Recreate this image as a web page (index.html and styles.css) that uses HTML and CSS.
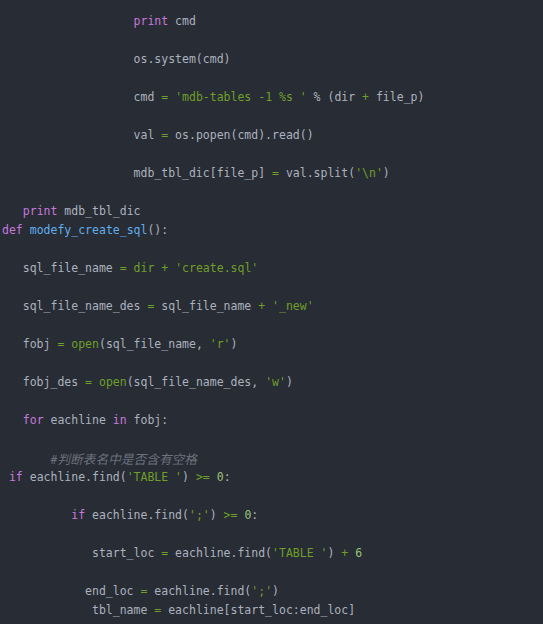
FILE: index.html
```html
<!DOCTYPE html>
<html>
<head>
<meta charset="utf-8">
<link rel="stylesheet" href="styles.css">
</head>
<body>
<div class="code">
<div class="ln">                   <span class="kw">print</span> cmd</div>
<div class="ln"> </div>
<div class="ln">                   os.system(cmd)</div>
<div class="ln"> </div>
<div class="ln">                   cmd <span class="op">=</span> <span class="str">'mdb-tables -1 %s '</span> % (dir <span class="op">+</span> file_p)</div>
<div class="ln"> </div>
<div class="ln">                   val <span class="op">=</span> os.popen(cmd).read()</div>
<div class="ln"> </div>
<div class="ln">                   mdb_tbl_dic[file_p] <span class="op">=</span> val.split(<span class="str">'\n'</span>)</div>
<div class="ln"> </div>
<div class="ln">   <span class="kw">print</span> mdb_tbl_dic</div>
<div class="ln"><span class="kw">def</span> <span class="fn">modefy_create_sql</span>():</div>
<div class="ln"> </div>
<div class="ln">   sql_file_name <span class="op">=</span> <span class="str">dir</span> <span class="op">+</span> <span class="str">'create.sql'</span></div>
<div class="ln"> </div>
<div class="ln">   sql_file_name_des <span class="op">=</span> sql_file_name <span class="op">+</span> <span class="str">'_new'</span></div>
<div class="ln"> </div>
<div class="ln">   fobj <span class="op">=</span> <span class="bi">open</span>(sql_file_name, <span class="str">'r'</span>)</div>
<div class="ln"> </div>
<div class="ln">   fobj_des <span class="op">=</span> <span class="bi">open</span>(sql_file_name_des, <span class="str">'w'</span>)</div>
<div class="ln"> </div>
<div class="ln">   <span class="kw">for</span> eachline <span class="kw">in</span> fobj:</div>
<div class="ln"> </div>
<div class="ln">       <span class="cm">#<span class="cjk">判断表名中是否含有空格</span></span></div>
<div class="ln"> <span class="kw">if</span> eachline.find(<span class="str">'TABLE '</span>) <span class="op">&gt;=</span> <span class="num">0</span>:</div>
<div class="ln"> </div>
<div class="ln">          <span class="kw">if</span> eachline.find(<span class="str">';'</span>) <span class="op">&gt;=</span> <span class="num">0</span>:</div>
<div class="ln"> </div>
<div class="ln">             start_loc <span class="op">=</span> eachline.find(<span class="str">'TABLE '</span>) <span class="op">+</span> <span class="num">6</span></div>
<div class="ln"> </div>
<div class="ln">            end_loc <span class="op">=</span> eachline.find(<span class="str">';'</span>)</div>
<div class="ln">             tbl_name <span class="op">=</span> eachline[start_loc:end_loc]</div>
</div>
</body>
</html>
```

FILE: styles.css
```css
html, body {
  margin: 0;
  padding: 0;
  background: #282c34;
  height: 100%;
}
.code {
  padding: 12px 0 0 2px;
  font-family: "DejaVu Sans Mono", "Liberation Mono", "Noto Sans CJK SC", monospace;
  font-size: 11.5px;
  line-height: 19px;
  color: #abb2bf;
}
.ln {
  white-space: pre;
  height: 19px;
}
.kw { color: #c678dd; }
.fn { color: #61aeee; }
.str { color: #6f9f2a; }
.op { color: #6f9f2a; }
.bi { color: #6f9f2a; }
.num { color: #98c379; }
.cm { color: #6b717d; font-style: italic; }
.cjk {
  font-family: "Noto Sans CJK SC", sans-serif;
  font-size: 12.7px;
  letter-spacing: 0;
}
```
